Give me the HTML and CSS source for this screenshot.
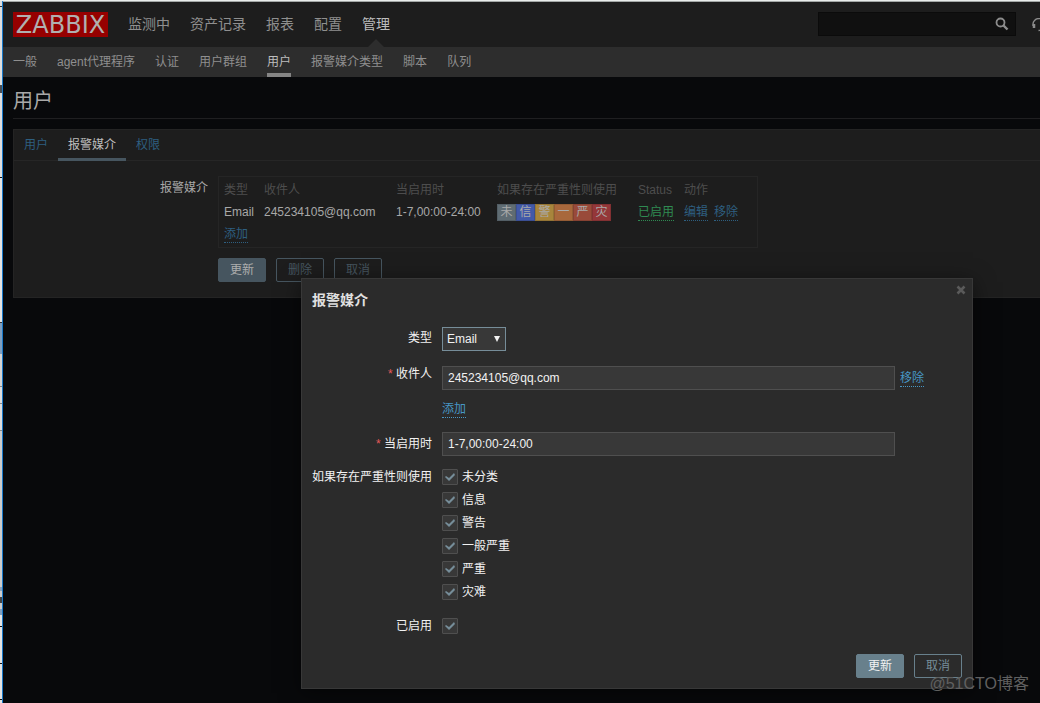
FILE: index.html
```html
<!DOCTYPE html>
<html lang="zh-CN">
<head>
<meta charset="utf-8">
<title>用户</title>
<link rel="stylesheet" href="styles.css">
</head>
<body>
<div class="edge"></div>
<div class="page">
  <header class="top">
    <a class="logo" href="#">ZABBIX</a>
    <nav class="menu">
      <a href="#">监测中</a>
      <a href="#">资产记录</a>
      <a href="#">报表</a>
      <a href="#">配置</a>
      <a href="#" class="selected">管理</a>
    </nav>
    <form class="search">
      <input type="text" aria-label="搜索">
      <button type="button" aria-label="搜索">
        <svg width="14" height="14" viewBox="0 0 14 14" fill="none" stroke="#8c8c8c"><circle cx="5.500" cy="5.500" r="4" stroke-width="1.800"/><path d="M8.500 8.500 L12.500 12.500" stroke-width="2.400"/></svg>
      </button>
    </form>
    <a class="support" href="#" aria-label="支持">
      <svg width="14" height="14" viewBox="0 0 14 14" fill="none" stroke="#8c8c8c"><path d="M1 8V6a5.500 5 0 0 1 12 0v3" stroke-width="1.400"/><path d="M2 6v4M12 6v4" stroke-width="2.500"/><path d="M12.500 10c0 2-2 2.500-6 2.500" stroke-width="1.300"/></svg>
    </a>
  </header>
  <nav class="submenu">
    <a href="#">一般</a>
    <a href="#">agent代理程序</a>
    <a href="#">认证</a>
    <a href="#">用户群组</a>
    <a href="#" class="selected">用户</a>
    <a href="#">报警媒介类型</a>
    <a href="#">脚本</a>
    <a href="#">队列</a>
  </nav>
  <main class="content">
    <h1>用户</h1>
    <section class="panel">
      <nav class="tabs">
        <a href="#">用户</a>
        <a href="#" class="selected">报警媒介</a>
        <a href="#">权限</a>
      </nav>
      <div class="panel-form">
        <div class="panel-label">报警媒介</div>
        <div class="media-box">
          <table class="media">
            <thead>
              <tr><th class="c-type">类型</th><th class="c-to">收件人</th><th class="c-when">当启用时</th><th class="c-sev">如果存在严重性则使用</th><th class="c-status">Status</th><th>动作</th></tr>
            </thead>
            <tbody>
              <tr>
                <td>Email</td>
                <td>245234105@qq.com</td>
                <td>1-7,00:00-24:00</td>
                <td><div class="sev"><span class="s0">未</span><span class="s1">信</span><span class="s2">警</span><span class="s3">一</span><span class="s4">严</span><span class="s5">灾</span></div></td>
                <td><a class="link on" href="#">已启用</a></td>
                <td><a class="link" href="#">编辑</a><a class="link next" href="#">移除</a></td>
              </tr>
              <tr><td colspan="6"><a class="link" href="#">添加</a></td></tr>
            </tbody>
          </table>
        </div>
        <div class="buttons panel-buttons">
          <button type="button" class="primary">更新</button>
          <button type="button">删除</button>
          <button type="button">取消</button>
        </div>
      </div>
    </section>
  </main>
</div>

<div class="dialog" role="dialog" aria-labelledby="dialog-title">
  <button type="button" class="close" aria-label="关闭">
    <svg width="10" height="10" viewBox="0 0 10 10" stroke="#5a5a5a" stroke-width="2.600"><path d="M1.500 1.500 L8.500 8.500 M8.500 1.500 L1.500 8.500"/></svg>
  </button>
  <h2 id="dialog-title">报警媒介</h2>
  <form class="fields">
    <label for="type" class="type-label">类型</label>
    <div class="select"><select id="type"><option>Email</option></select></div>

    <label for="sendto" class="required raised">收件人</label>
    <div class="recipients">
      <div class="recipient"><input id="sendto" class="text" type="text" value="245234105@qq.com"><a class="link" href="#">移除</a></div>
      <div><a class="link" href="#">添加</a></div>
    </div>

    <label for="period" class="required">当启用时</label>
    <input id="period" class="text" type="text" value="1-7,00:00-24:00">

    <div class="label-top">如果存在严重性则使用</div>
    <div class="checks">
      <label><input type="checkbox" checked>未分类</label>
      <label><input type="checkbox" checked>信息</label>
      <label><input type="checkbox" checked>警告</label>
      <label><input type="checkbox" checked>一般严重</label>
      <label><input type="checkbox" checked>严重</label>
      <label><input type="checkbox" checked>灾难</label>
    </div>

    <label for="enabled">已启用</label>
    <input id="enabled" type="checkbox" checked>
  </form>
  <div class="buttons dialog-buttons">
    <button type="button" class="primary">更新</button>
    <button type="button">取消</button>
  </div>
</div>
<div class="watermark">@51CTO博客</div>
</body>
</html>
```
FILE: styles.css
```css
* { box-sizing: border-box; }

body {
  margin: 0;
  min-height: 100vh;
  display: flex;
  position: relative;
  overflow: hidden;
  background: #08090b;
  border-top: 1px solid #e9eceb;
  color: #a8a8a8;
  font: 12px/22px "Liberation Sans", "Noto Sans CJK SC", sans-serif;
}

a { color: inherit; text-decoration: none; }
input, select, button { font: inherit; color: inherit; margin: 0; }

/* Window edge */
.edge {
  flex: none;
  width: 3px;
  border-right: 1px solid #1878c8;
  background: linear-gradient(#dedede 5px, #333 5px 6px, #dedede 6px 84px, #4a4f55 84px 92px,
    #dedede 92px 176px, #111 176px 177px, #e4e4e4 177px 321px, #333 321px 322px,
    #7f9fc0 322px 353px, #d4d4d4 353px 385px, #888 385px 386px, #ddd 386px 402px, #888 402px 403px,
    #ddd 403px 429px, #888 429px 430px, #ccc 430px 586px, #8aa2bc 586px 590px, #ccc 590px 596px,
    #444 596px 602px, #ccc 602px 608px, #7f9fc0 608px 614px, #e4e4e4 614px 625px,
    #111 625px 626px, #e4e4e4 626px 662px, #111 662px 663px, #e4e4e4 663px 698px, #111 698px 699px, #e4e4e4 699px);
}

.page { flex: 1; min-width: 0; }

/* Header */
.top {
  display: flex;
  align-items: center;
  height: 46px;
  padding-left: 10px;
  background: #1d1d1d;
  border-top: 1px solid #a3a7a6;
  overflow: hidden;
}
.logo {
  width: 95px;
  height: 25px;
  margin-right: 20px;
  background: #960000;
  color: #b0b0b0;
  font: 24px/26px "DejaVu Sans", sans-serif;
  text-align: center;
}
.menu { display: flex; align-self: stretch; gap: 20px; font-size: 14px; line-height: 44px; color: #8f8f8f; }
.menu .selected { position: relative; color: #bdbdbd; }
.menu .selected::after {
  content: "";
  position: absolute;
  left: 50%;
  bottom: 0;
  margin-left: -8px;
  border: 8px solid transparent;
  border-top: 0;
  border-bottom-color: #2d2d2d;
}
.search {
  display: flex;
  align-self: flex-start;
  width: 198px;
  height: 24px;
  margin-top: 10px;
  margin-left: auto;
  background: #101010;
  border: 1px solid #0b0b0b;
}
.search input { flex: 1; min-width: 0; background: none; border: 0; outline: 0; }
.search button { display: flex; align-items: center; width: 22px; padding: 0 2px; background: none; border: 0; }
.support { display: flex; width: 8px; margin-left: 16px; }
.support svg { flex: none; }

.submenu { display: flex; gap: 20px; height: 30px; padding-left: 10px; background: #2d2d2d; line-height: 30px; color: #8f8f8f; }
.submenu .selected { color: #bdbdbd; border-bottom: 4px solid #858585; }

/* Content */
.content { padding-left: 10px; }
h1 {
  margin: 0 0 10px;
  padding: 10px 0 2px;
  border-bottom: 1px solid #1f1f21;
  font-size: 20px;
  line-height: 29px;
  font-weight: 400;
}
.panel { background: #1d1d1d; border: 1px solid #242424; border-right: 0; }
.tabs { display: flex; height: 31px; border-bottom: 1px solid #262626; line-height: 31px; color: #2e5f80; }
.tabs a { height: 31px; padding: 0 10px; }
.tabs .selected { color: #bdbdbd; border-bottom: 3px solid #46555f; }
.panel-form { display: grid; grid-template-columns: 194px 1fr; column-gap: 10px; row-gap: 10px; padding: 15px 0; }
.panel-label { text-align: right; line-height: 24px; }
.media-box { width: 540px; padding: 2px 0; border: 1px solid #252525; }
.panel-buttons { grid-column: 2; }

.media { width: 100%; table-layout: fixed; border-collapse: collapse; }
.media th, .media td { height: 22px; padding: 0 5px; text-align: left; font-weight: 400; white-space: nowrap; }
.media th { color: #4d4d4d; }
.c-type { width: 40px; }
.c-to { width: 132px; }
.c-when { width: 101px; }
.c-sev { width: 141px; }
.c-status { width: 46px; }
.sev { display: flex; text-align: center; color: #aaa; }
.sev span { width: 19px; border: 1px solid rgba(0, 0, 0, 0.12); line-height: 15px; }
.s0 { background: #5f6c73; }
.s1 { background: #4259a8; }
.s2 { background: #a8853c; }
.s3 { background: #a8683c; }
.s4 { background: #994a3a; }
.s5 { background: #943739; }

.link { display: inline-block; line-height: 15px; color: #2e5f80; border-bottom: 1px dotted; }
.link.on { color: #2f8a52; }
.link.next { margin-left: 6px; }

.buttons { display: flex; gap: 10px; }
.buttons button {
  width: 48px;
  height: 24px;
  padding: 0;
  background: none;
  border: 1px solid #46555f;
  border-radius: 2px;
  color: #46555f;
  line-height: 22px;
}
.buttons .primary { background: #46555f; color: #adadad; }

/* Dialog */
.dialog {
  position: absolute;
  left: 301px;
  top: 277px;
  width: 672px;
  padding: 10px;
  background: #2b2b2b;
  border: 1px solid #383838;
  box-shadow: 0 4px 20px rgba(0, 0, 0, 0.5);
  color: #f2f2f2;
}
.dialog h2 { margin: 0 0 16px; font-size: 14px; line-height: 22px; color: #e0e0e0; }
.close { position: absolute; right: 6px; top: 6px; display: flex; padding: 0; background: none; border: 0; }

.fields { display: grid; grid-template-columns: 120px 1fr; column-gap: 10px; row-gap: 12px; align-items: center; }
.fields > label, .label-top { text-align: right; white-space: nowrap; }
.required::before { content: "* "; color: #e45959; }
.type-label { align-self: start; }
.raised { align-self: start; line-height: 16px; }
.label-top { align-self: start; line-height: 19px; }

.select { position: relative; width: 64px; margin-bottom: 3px; }
.select select {
  display: block;
  width: 100%;
  height: 24px;
  padding: 0 4px;
  appearance: none;
  background: #383838;
  border: 1px solid #768d99;
  border-radius: 0;
}
.select::after {
  content: "";
  position: absolute;
  right: 6px;
  top: 9px;
  border: 3px solid transparent;
  border-top: 6px solid #f2f2f2;
  border-bottom: 0;
  pointer-events: none;
}
.text { width: 453px; height: 24px; padding: 0 5px; background: #383838; border: 1px solid #4f4f4f; }
.recipient { display: flex; gap: 5px; align-items: center; margin-bottom: 8px; }
.recipient .link { margin-top: 2px; }
.dialog .link { color: #4796c4; }

.checks { display: grid; gap: 7px; padding: 1px 0 3px; }
.checks label { display: flex; align-items: center; gap: 4px; height: 16px; }
input[type="checkbox"] {
  appearance: none;
  width: 16px;
  height: 16px;
  background: #383838;
  border: 1px solid #4f4f4f;
  border-radius: 1px;
}
input[type="checkbox"]:checked::before {
  content: "";
  display: block;
  width: 14px;
  height: 14px;
  background: #768d99;
  clip-path: polygon(2px 7px, 3px 6px, 6px 8px, 11px 3px, 12px 5px, 6px 11px);
}
.dialog-buttons { justify-content: flex-end; margin-top: 17px; }
.dialog-buttons button { border-color: #68808c; color: #768d99; }
.dialog-buttons .primary { background: #68808c; color: #f2f2f2; }

.watermark { position: absolute; right: 11px; bottom: 8px; font-size: 16px; line-height: 22px; color: #606060; }
```
